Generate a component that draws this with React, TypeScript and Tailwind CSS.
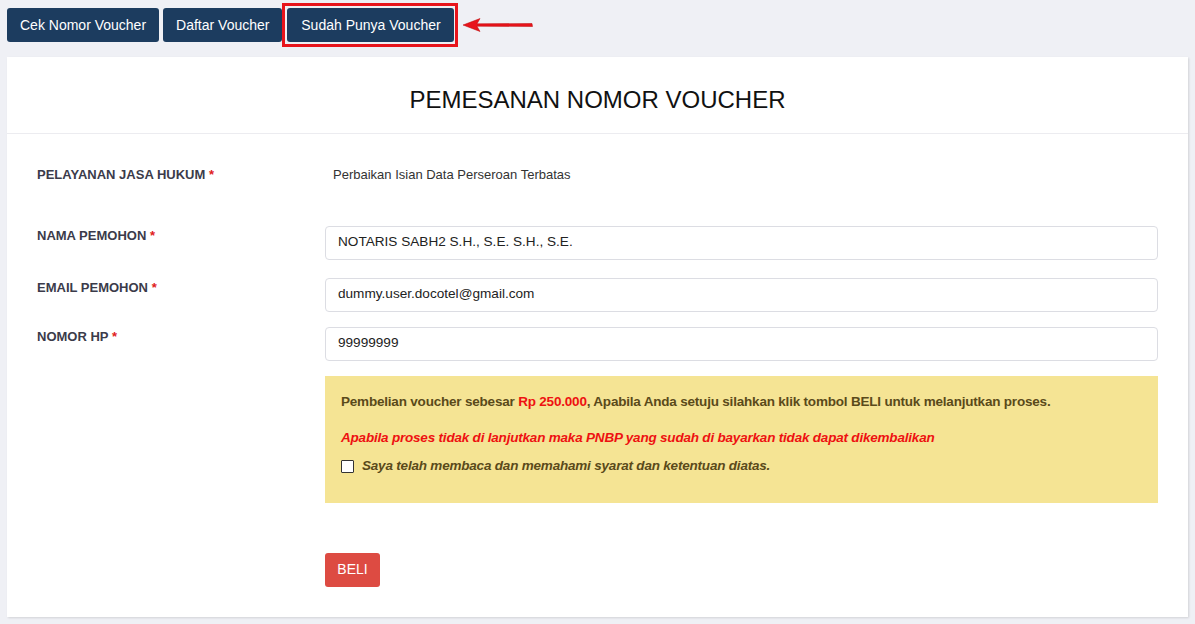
import { useState } from 'react'

const narrow = "font-['Liberation_Sans_Narrow','Arial_Narrow','Liberation_Sans',sans-serif]"

function Field({ label, value }: { label: string; value: string }) {
  return (
    <div className="flex items-start">
      <div className={`w-[288px] pt-[0px] text-[13px] font-bold text-[#3b3b4a] ${narrow}`}>
        {label} <span className="text-[#e02020]">*</span>
      </div>
      <div className="flex-1 h-[34px] border border-[#dcdde3] rounded-[4px] px-3 flex items-center text-[13.6px] text-[#222]">
        {value}
      </div>
    </div>
  )
}

export default function App() {
  const [agree, setAgree] = useState(false)

  return (
    <div className="w-[1195px] h-[624px] bg-[#eff0f5] font-['Liberation_Sans',Arial,sans-serif] overflow-hidden">
      {/* tab buttons */}
      <div className="flex gap-1 pl-[7px] pt-[8px]">
        <button className="h-[34px] px-[13px] bg-[#1c3c5f] text-white text-[14px] rounded-[3px]">Cek Nomor Voucher</button>
        <button className="h-[34px] px-[13px] bg-[#1c3c5f] text-white text-[14px] rounded-[3px]">Daftar Voucher</button>
        <div className="relative ml-[1px]">
          <button className="h-[34px] w-[167px] bg-[#1c3c5f] text-white text-[14px] rounded-[3px]">Sudah Punya Voucher</button>
          <div className="absolute -left-[5px] -top-[5px] -right-[4px] -bottom-[5px] border-[3px] border-[#e8141c] pointer-events-none" />
          <svg className="absolute left-[173px] top-[8px]" width="76" height="18" viewBox="0 0 76 18">
            <path d="M3 9 L20 2.5 L17 7.8 L72 7.5 L72.5 10.5 L17 10.2 L20 15.5 Z" fill="#e8141c" stroke="#b00" strokeWidth="0.5" />
          </svg>
        </div>
      </div>

      {/* card */}
      <div className="mx-[7px] mt-[15px] bg-white shadow-[1px_1px_2px_rgba(0,0,0,0.12)] h-[560px]">
        <div className="h-[77px] border-b border-[#ececf0] flex items-center justify-center pt-[9px]">
          <h1 className="text-[24px] text-[#111]">PEMESANAN NOMOR VOUCHER</h1>
        </div>

        <div className="px-[30px] pt-[31px]">
          <div className="flex items-start">
            <div className={`w-[296px] text-[13px] font-bold text-[#3b3b4a] ${narrow}`}>
              PELAYANAN JASA HUKUM <span className="text-[#e02020]">*</span>
            </div>
            <div className={`text-[13px] text-[#333] ${narrow}`}>Perbaikan Isian Data Perseroan Terbatas</div>
          </div>

          <div className="mt-[41px] flex flex-col gap-[18px]">
            <Field label="NAMA PEMOHON" value="NOTARIS SABH2 S.H., S.E. S.H., S.E." />
            <Field label="EMAIL PEMOHON" value="dummy.user.docotel@gmail.com" />
            <div className="-mt-[3px]">
              <Field label="NOMOR HP" value="99999999" />
            </div>
          </div>

          <div className="ml-[288px] mt-[15px] h-[127px] bg-[#f5e494] px-4 pt-[16px]">
            <p className={`text-[13.5px] tracking-[-0.2px] font-bold text-[#5a4a1a] ${narrow}`}>
              Pembelian voucher sebesar <span className="text-[#ee1111]">Rp 250.000</span>, Apabila Anda setuju silahkan klik tombol BELI untuk melanjutkan proses.
            </p>
            <p className={`mt-[16px] text-[13.5px] tracking-[-0.2px] font-bold italic text-[#ee1111] ${narrow}`}>
              Apabila proses tidak di lanjutkan maka PNBP yang sudah di bayarkan tidak dapat dikembalikan
            </p>
            <label className={`mt-[8px] flex items-center gap-[8px] text-[13.5px] tracking-[-0.2px] font-bold italic text-[#5a4a1a] ${narrow}`}>
              <input
                type="checkbox"
                checked={agree}
                onChange={e => setAgree(e.target.checked)}
                className="w-[13px] h-[13px] m-0 appearance-none border border-[#333] bg-white rounded-[1px]"
              />
              Saya telah membaca dan memahami syarat dan ketentuan diatas.
            </label>
          </div>

          <button className="ml-[288px] mt-[50px] h-[34px] w-[55px] bg-[#dd4b42] text-white text-[14px] rounded-[3px]">
            BELI
          </button>
        </div>
      </div>
    </div>
  )
}
